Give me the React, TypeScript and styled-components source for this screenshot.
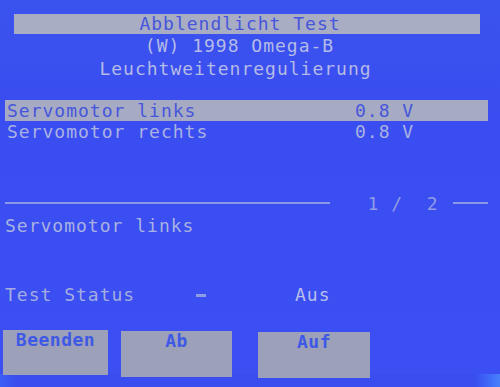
import React from "react";
import styled, { createGlobalStyle } from "styled-components";

const Global = createGlobalStyle`
  html, body { margin: 0; padding: 0; background: #3f63f4; }
  body { width: 500px; height: 387px; overflow: hidden; }
`;

const Frame = styled.div`
  width: 500px;
  height: 387px;
  background: linear-gradient(90deg, #3d5ff6 0%, #3a4ef0 3%, #3a4ef0 95%, #3f6cf8 98%, #4a80fa 100%);
  display: flex;
  flex-direction: column;
  font-family: "DejaVu Sans Mono", "Liberation Mono", monospace;
  font-size: 18px;
  letter-spacing: 1px;
  color: #aab3e4;
  overflow: hidden;
`;

const Screen = styled.div`
  display: flex;
  flex-direction: column;
  padding: 14px 12px 0 5px;
  height: 374px;
  box-sizing: border-box;
  background: linear-gradient(180deg, #3b53ee 0%, #3a4df0 30%, #3b4ff2 100%);
`;

const Header = styled.div`
  display: flex;
  flex-direction: column;
  align-items: stretch;
`;

const TitleBar = styled.div`
  margin-left: 9px;
  margin-right: 8px;
  height: 20px;
  background: #a9adc4;
  color: #4655dc;
  display: flex;
  align-items: center;
  justify-content: center;
  padding-right: 14px;
  line-height: 20px;
`;

const HeaderLine = styled.div<{ $shift?: number }>`
  height: 23px;
  line-height: 23px;
  text-align: center;
  padding-left: ${(p) => p.$shift ?? 0}px;
  padding-right: 22px;
  color: #b4bbe6;
`;

const Divider = styled.div<{ $mt?: number; $ml?: number; $w?: number }>`
  margin-top: ${(p) => p.$mt ?? 0}px;
  margin-left: ${(p) => p.$ml ?? 0}px;
  width: ${(p) => (p.$w ? `${p.$w}px` : "auto")};
  height: 2px;
  background: #9aa6e6;
  opacity: 0.85;
`;

const List = styled.div`
  margin-top: 10px;
  display: flex;
  flex-direction: column;
`;

const Row = styled.div<{ $active?: boolean }>`
  display: flex;
  height: 21px;
  line-height: 21px;
  padding-left: 2px;
  background: ${(p) => (p.$active ? "#a6abc3" : "transparent")};
  color: ${(p) => (p.$active ? "#4656dc" : "#a9b2e2")};
`;

const RowLabel = styled.span`
  width: 348px;
`;

const RowValue = styled.span``;

const Pager = styled.div`
  margin-top: 51px;
  display: flex;
  align-items: center;
  height: 20px;
`;

const PagerLine = styled.div<{ $w: number }>`
  width: ${(p) => p.$w}px;
  height: 2px;
  background: #9aa6e6;
  opacity: 0.85;
`;

const PagerText = styled.span`
  margin: 0 14px 0 37px;
  white-space: pre;
  color: #8f9ce6;
`;

const Detail = styled.div`
  margin-top: 2px;
  height: 22px;
  line-height: 22px;
  color: #a9b2e2;
`;

const Status = styled.div`
  margin-top: 47px;
  display: flex;
  align-items: center;
  height: 22px;
  color: #a4ade0;
`;

const StatusLabel = styled.span`
  width: 191px;
`;

const Dash = styled.span`
  width: 10px;
  height: 3px;
  background: #8f9ce6;
  margin-right: 89px;
  margin-top: 2px;
`;

const StatusValue = styled.span`
  color: #b9c0ea;
`;

const Buttons = styled.div`
  margin-top: 25px;
  margin-left: -2px;
  display: flex;
  align-items: flex-start;
`;

const Btn = styled.div<{ $w: number; $mt: number; $ml: number; $h: number }>`
  width: ${(p) => p.$w}px;
  height: ${(p) => p.$h}px;
  margin-top: ${(p) => p.$mt}px;
  margin-left: ${(p) => p.$ml}px;
  background: #9ca1b9;
  color: #3f58e6;
  font-weight: bold;
  letter-spacing: 0.5px;
  display: flex;
  justify-content: center;
  padding-top: 0px;
  line-height: 20px;
  box-sizing: border-box;
`;

export default function App() {
  return (
    <>
      <Global />
      <Frame>
        <Screen>
          <Header>
            <TitleBar>Abblendlicht Test</TitleBar>
            <HeaderLine $shift={8}>(W) 1998 Omega-B</HeaderLine>
            <HeaderLine>Leuchtweitenregulierung</HeaderLine>
          </Header>
          <Divider $mt={10} $ml={5} $w={475} />
          <List>
            <Row $active>
              <RowLabel>Servomotor links</RowLabel>
              <RowValue>0.8 V</RowValue>
            </Row>
            <Row>
              <RowLabel>Servomotor rechts</RowLabel>
              <RowValue>0.8 V</RowValue>
            </Row>
          </List>
          <Pager>
            <PagerLine $w={330} />
            <PagerText>1 /  2</PagerText>
            <PagerLine $w={36} />
          </Pager>
          <Detail>Servomotor links</Detail>
          <Status>
            <StatusLabel>Test Status</StatusLabel>
            <Dash />
            <StatusValue>Aus</StatusValue>
          </Status>
          <Buttons>
            <Btn $w={105} $h={45} $mt={0} $ml={0}>Beenden</Btn>
            <Btn $w={111} $h={46} $mt={1} $ml={13}>Ab</Btn>
            <Btn $w={112} $h={46} $mt={2} $ml={26}>Auf</Btn>
          </Buttons>
        </Screen>
      </Frame>
    </>
  );
}
